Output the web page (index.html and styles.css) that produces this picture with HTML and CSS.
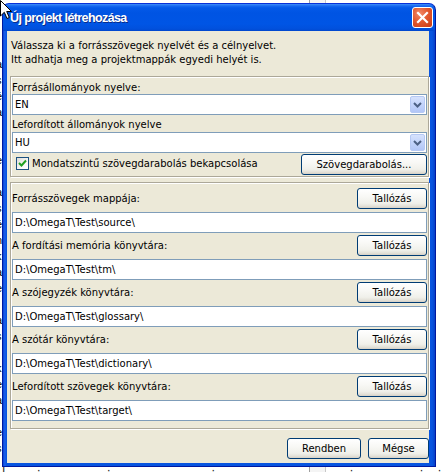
FILE: index.html
```html
<!DOCTYPE html>
<html lang="hu">
<head>
<meta charset="utf-8">
<title>Új projekt létrehozása</title>
<link rel="stylesheet" href="styles.css">
</head>
<body>
<div class="desk">
  <div class="behind-left">í<br>a<br>s<br>é<br>a<br>l<br>t<br>e<br>i<br>a<br>s<br>é<br>n<br>k<br>a<br>e<br>t<br>a<br>s<br>i<br>k<br>e<br>a<br>i<br>e<br>s<br>t</div>
  <div class="behind-bottom">í · , · . , · . . ' · , ·· ' ·</div>
  <div class="behind-scroll"></div>

  <div class="window">
    <div class="titlebar">
      <span class="title">Új projekt létrehozása</span>
      <span class="close" aria-label="Bezárás">
        <svg width="13" height="13" viewBox="0 0 13 13"><path d="M2 2 L11 11 M11 2 L2 11" stroke="#fff" stroke-width="2.2" stroke-linecap="square"/></svg>
      </span>
    </div>
    <div class="client">
      <p class="intro">Válassza ki a forrásszövegek nyelvét és a célnyelvet.<br>Itt adhatja meg a projektmappák egyedi helyét is.</p>

      <div class="panel lang">
        <div class="label first">Forrásállományok nyelve:</div>
        <div class="combo"><span class="value">EN</span><span class="arrow"><svg width="9" height="6" viewBox="0 0 9 6"><path d="M1 1 L4.5 4.5 L8 1" fill="none" stroke="#4D6185" stroke-width="2"/></svg></span></div>
        <div class="label second">Lefordított állományok nyelve</div>
        <div class="combo"><span class="value">HU</span><span class="arrow"><svg width="9" height="6" viewBox="0 0 9 6"><path d="M1 1 L4.5 4.5 L8 1" fill="none" stroke="#4D6185" stroke-width="2"/></svg></span></div>
        <div class="checkrow">
          <span class="check">
            <span class="box"><svg width="9" height="9" viewBox="0 0 9 9"><path d="M1 4 L3.5 6.5 L8 1.5" fill="none" stroke="#21A121" stroke-width="2"/></svg></span>
            <span>Mondatszintű szövegdarabolás bekapcsolása</span>
          </span>
          <span class="btn seg">Szövegdarabolás...</span>
        </div>
      </div>

      <div class="panel dirs">
        <div class="dirrow"><span>Forrásszövegek mappája:</span><span class="btn browse">Tallózás</span></div>
        <div class="field">D:\OmegaT\Test\source\</div>
        <div class="dirrow"><span>A fordítási memória könyvtára:</span><span class="btn browse">Tallózás</span></div>
        <div class="field">D:\OmegaT\Test\tm\</div>
        <div class="dirrow"><span>A szójegyzék könyvtára:</span><span class="btn browse">Tallózás</span></div>
        <div class="field">D:\OmegaT\Test\glossary\</div>
        <div class="dirrow"><span>A szótár könyvtára:</span><span class="btn browse">Tallózás</span></div>
        <div class="field">D:\OmegaT\Test\dictionary\</div>
        <div class="dirrow"><span>Lefordított szövegek könyvtára:</span><span class="btn browse">Tallózás</span></div>
        <div class="field">D:\OmegaT\Test\target\</div>
      </div>

      <div class="actions">
        <span class="btn ok">Rendben</span>
        <span class="btn cancel">Mégse</span>
      </div>
    </div>
  </div>

  <svg class="cursor" width="13" height="20" viewBox="0 0 13 20">
    <path d="M0.5 0.5 L0.5 16 L4.3 12.3 L7 18.5 L9.3 17.5 L6.7 11.5 L11.5 11.5 Z" fill="#fff" stroke="#000" stroke-width="1"/>
  </svg>
</div>
</body>
</html>
```

FILE: styles.css
```css
* { box-sizing: border-box; }

body {
  margin: 0;
  background: #fff;
  font-family: "DejaVu Sans", Verdana, sans-serif;
  font-size: 10px;
  color: #000;
}

.desk {
  position: relative;
  width: 442px;
  height: 472px;
  overflow: hidden;
  background: #fff;
}

/* fragments of windows lying behind the dialog */
.behind-left {
  position: absolute;
  left: -4px;
  top: 40px;
  width: 8px;
  font-family: "Liberation Sans", Arial, sans-serif;
  font-size: 11px;
  line-height: 16px;
  color: #000;
}
.behind-bottom {
  position: absolute;
  left: 2px;
  top: 463px;
  font-family: "Liberation Sans", Arial, sans-serif;
  font-size: 12px;
  letter-spacing: 14px;
  color: #222;
  white-space: nowrap;
}
.behind-scroll {
  position: absolute;
  left: 309px;
  top: 0;
  width: 17px;
  height: 472px;
  border-left: 1px solid #A0A0A0;
  border-right: 1px solid #C8C8C8;
  background: #F4F4F4;
}

/* dialog window */
.window {
  position: relative;
  margin: 3px 0 0 2px;
  width: 434px;
  height: 464px;
  border: 1px solid #0019A0;
  border-top-color: #0831D9;
  border-radius: 7px 7px 0 0;
  background: linear-gradient(to right, #0842D6 0, #1F62EC 2px, #0855E0 3px, #0855E0 calc(100% - 3px), #0640C8 100%);
  display: flex;
  flex-direction: column;
  overflow: hidden;
}

.titlebar {
  height: 27px;
  flex: none;
  display: flex;
  align-items: center;
  justify-content: space-between;
  padding: 0 2px 0 7px;
  background: linear-gradient(to bottom, #3F8EF9 0, #1769F0 2px, #0459E8 4px, #0054E3 9px, #0055E5 20px, #0150DC 25px, #0046CC 27px);
  border-radius: 6px 6px 0 0;
}

.title {
  color: #fff;
  font-family: "Liberation Sans", Arial, sans-serif;
  font-weight: bold;
  font-size: 12.5px;
  letter-spacing: -0.6px;
  text-shadow: 1px 1px 0 #0A2D8A;
  margin-top: 1px;
}

.close {
  width: 21px;
  height: 21px;
  border: 1px solid #fff;
  border-radius: 3px;
  background: radial-gradient(circle at 35% 30%, #F28A6A 0, #E2582F 45%, #C83A14 100%);
  display: flex;
  align-items: center;
  justify-content: center;
}

.client {
  flex: 1;
  margin: 0 6px 3px 4px;
  background: #ECE9D8;
  display: flex;
  flex-direction: column;
}

.intro {
  margin: 0;
  padding: 8px 0 0 4px;
  line-height: 14px;
}

.panel {
  margin-left: 3px;
  width: 419px;
  border: 1px solid #ACA899;
  box-shadow: 1px 1px 0 #fff, inset 1px 1px 0 #fff;
  padding: 0 1px;
  display: flex;
  flex-direction: column;
}

.lang {
  margin-top: 9px;
  padding-top: 5px;
  padding-bottom: 1px;
}

.label {
  line-height: 12px;
  height: 12px;
}
.label.second { margin-top: 4px; }

.combo {
  height: 21px;
  border: 1px solid #7F9DB9;
  background: #fff;
  display: flex;
  align-items: center;
  justify-content: space-between;
  padding: 0 1px;
}
.label.second + .combo { margin-top: 1px; }

.value { padding-left: 1px; }

.arrow {
  width: 15px;
  height: 17px;
  border: 1px solid #B6C9F4;
  border-radius: 2px;
  background: linear-gradient(to bottom, #D6E2FD 0, #C3D4FB 50%, #B2C6F7 100%);
  display: flex;
  align-items: center;
  justify-content: center;
}

.checkrow {
  margin-top: 1px;
  height: 21px;
  display: flex;
  align-items: center;
  justify-content: space-between;
}

.check {
  display: flex;
  align-items: center;
  gap: 3px;
  padding-left: 4px;
  margin-top: -2px;
}

.box {
  width: 13px;
  height: 13px;
  border: 1px solid #1C5180;
  background: linear-gradient(135deg, #DCDCD7 0, #F8F8F6 60%, #fff 100%);
  display: flex;
  align-items: center;
  justify-content: center;
}

.btn {
  height: 21px;
  border: 1px solid #003C74;
  border-radius: 3px;
  background: linear-gradient(to bottom, #FFFFFF 0, #F8F8F5 40%, #F0F0EA 75%, #E3E1D8 90%, #D6D0C5 100%);
  display: flex;
  align-items: center;
  justify-content: center;
  color: #000;
}

.seg { width: 126px; }

.dirs {
  margin-top: 5px;
  padding-top: 5px;
  padding-bottom: 7px;
}

.dirrow {
  height: 21px;
  display: flex;
  align-items: center;
  justify-content: space-between;
  margin-top: 2px;
}
.dirs .dirrow:first-child { margin-top: 0; }

.browse { width: 70px; }

.field {
  height: 21px;
  margin-top: 3px;
  border: 1px solid #7F9DB9;
  background: #fff;
  display: flex;
  align-items: center;
  padding-left: 2px;
}

.actions {
  margin-top: 9px;
  display: flex;
  justify-content: flex-end;
  gap: 7px;
}
.ok { width: 74px; }
.cancel { width: 61px; }

.cursor {
  position: absolute;
  left: 0;
  top: 0;
}
```
